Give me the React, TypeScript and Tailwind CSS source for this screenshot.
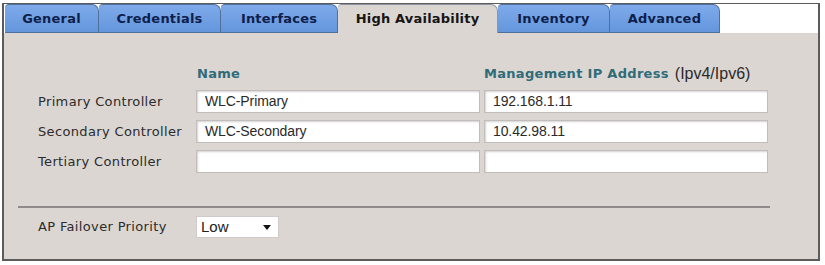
import React from "react";

const tabs = [
  { label: "General", w: "w-[94px]" },
  { label: "Credentials", w: "w-[122px]" },
  { label: "Interfaces", w: "w-[117px]" },
  { label: "High Availability", w: "w-[160px]", active: true },
  { label: "Inventory", w: "w-[112px]" },
  { label: "Advanced", w: "w-[110px]" },
];

const rows = [
  { label: "Primary Controller", name: "WLC-Primary", ip: "192.168.1.11" },
  { label: "Secondary Controller", name: "WLC-Secondary", ip: "10.42.98.11" },
  { label: "Tertiary Controller", name: "", ip: "" },
];

function Field({ value }: { value: string }) {
  return (
    <div className="w-[284px] h-[23px] bg-white border border-[#c2bdba] shadow-[inset_1px_1px_2px_rgba(0,0,0,0.18)] flex items-center pl-[8px] text-[14px] text-[#2a2a2a] font-['Liberation_Sans',Arial,sans-serif] tracking-[-0.1px]">
      {value}
    </div>
  );
}

export default function App() {
  return (
    <div className="w-[825px] h-[265px] bg-white pt-[3px] pl-[2px]">
      <div className="w-[818px] h-[258px] border-2 border-t border-[#5c5a5a] flex flex-col font-['DejaVu_Sans',Verdana,sans-serif]">
        {/* Tab strip */}
        <div className="flex h-[29px] bg-white pl-[1px]">
          {tabs.map((t) =>
            t.active ? (
              <div
                key={t.label}
                className={`${t.w} h-[29px] bg-[#dcd6d3] rounded-tl-[4px] rounded-tr-[7px] border-r border-t border-[#8b97a8] flex items-center justify-center text-[13px] font-bold text-[#151515] tracking-[0.2px]`}
              >
                {t.label}
              </div>
            ) : (
              <div
                key={t.label}
                className={`${t.w} h-[29px] bg-gradient-to-b from-[#7eaaea] to-[#6496dc] rounded-tl-[4px] rounded-tr-[7px] border-r border-t border-b border-[#4f6f9c] flex items-center justify-center text-[13px] font-bold text-[#0e1f4c] tracking-[0.2px]`}
              >
                {t.label}
              </div>
            )
          )}
          <div className="flex-1" />
        </div>

        {/* Content */}
        <div className="flex-1 bg-[#dcd6d3] pt-[32px]">
          <div className="flex h-[17px] items-center text-[13px] tracking-[0.3px]">
            <div className="w-[192px]" />
            <div className="w-[288px] pl-[1px] font-bold text-[#2f6c79]">Name</div>
            <div className="flex items-center">
              <span className="font-bold text-[#2f6c79]">Management IP Address</span>
              <span className="ml-[6px] text-[16px] tracking-[0px] text-[#2a2a2a] font-['Liberation_Sans',Arial,sans-serif]">(Ipv4/Ipv6)</span>
            </div>
          </div>

          <div className="flex flex-col gap-[7px] mt-[8px]">
            {rows.map((r) => (
              <div key={r.label} className="flex items-center h-[23px]">
                <div className="w-[192px] pl-[34px] text-[13px] tracking-[0.35px] text-[#2b2b2b]">{r.label}</div>
                <Field value={r.name} />
                <div className="w-[4px]" />
                <Field value={r.ip} />
              </div>
            ))}
          </div>

          <div className="ml-[14px] w-[752px] mt-[33px] border-t-2 border-[#8f8b8a]" />

          <div className="flex items-center mt-[8px] h-[22px]">
            <div className="w-[192px] pl-[34px] text-[13px] tracking-[0.35px] text-[#2b2b2b]">AP Failover Priority</div>
            <div className="w-[83px] h-[22px] bg-white border border-[#d0cbc8] flex items-center justify-between pl-[4px] pr-[7px] text-[15px] text-[#222] font-['Liberation_Sans',Arial,sans-serif]">
              <span>Low</span>
              <svg width="8" height="5" viewBox="0 0 8 5">
                <path d="M0 0 L8 0 L4 5 Z" fill="#111" />
              </svg>
            </div>
          </div>
        </div>
      </div>
    </div>
  );
}
